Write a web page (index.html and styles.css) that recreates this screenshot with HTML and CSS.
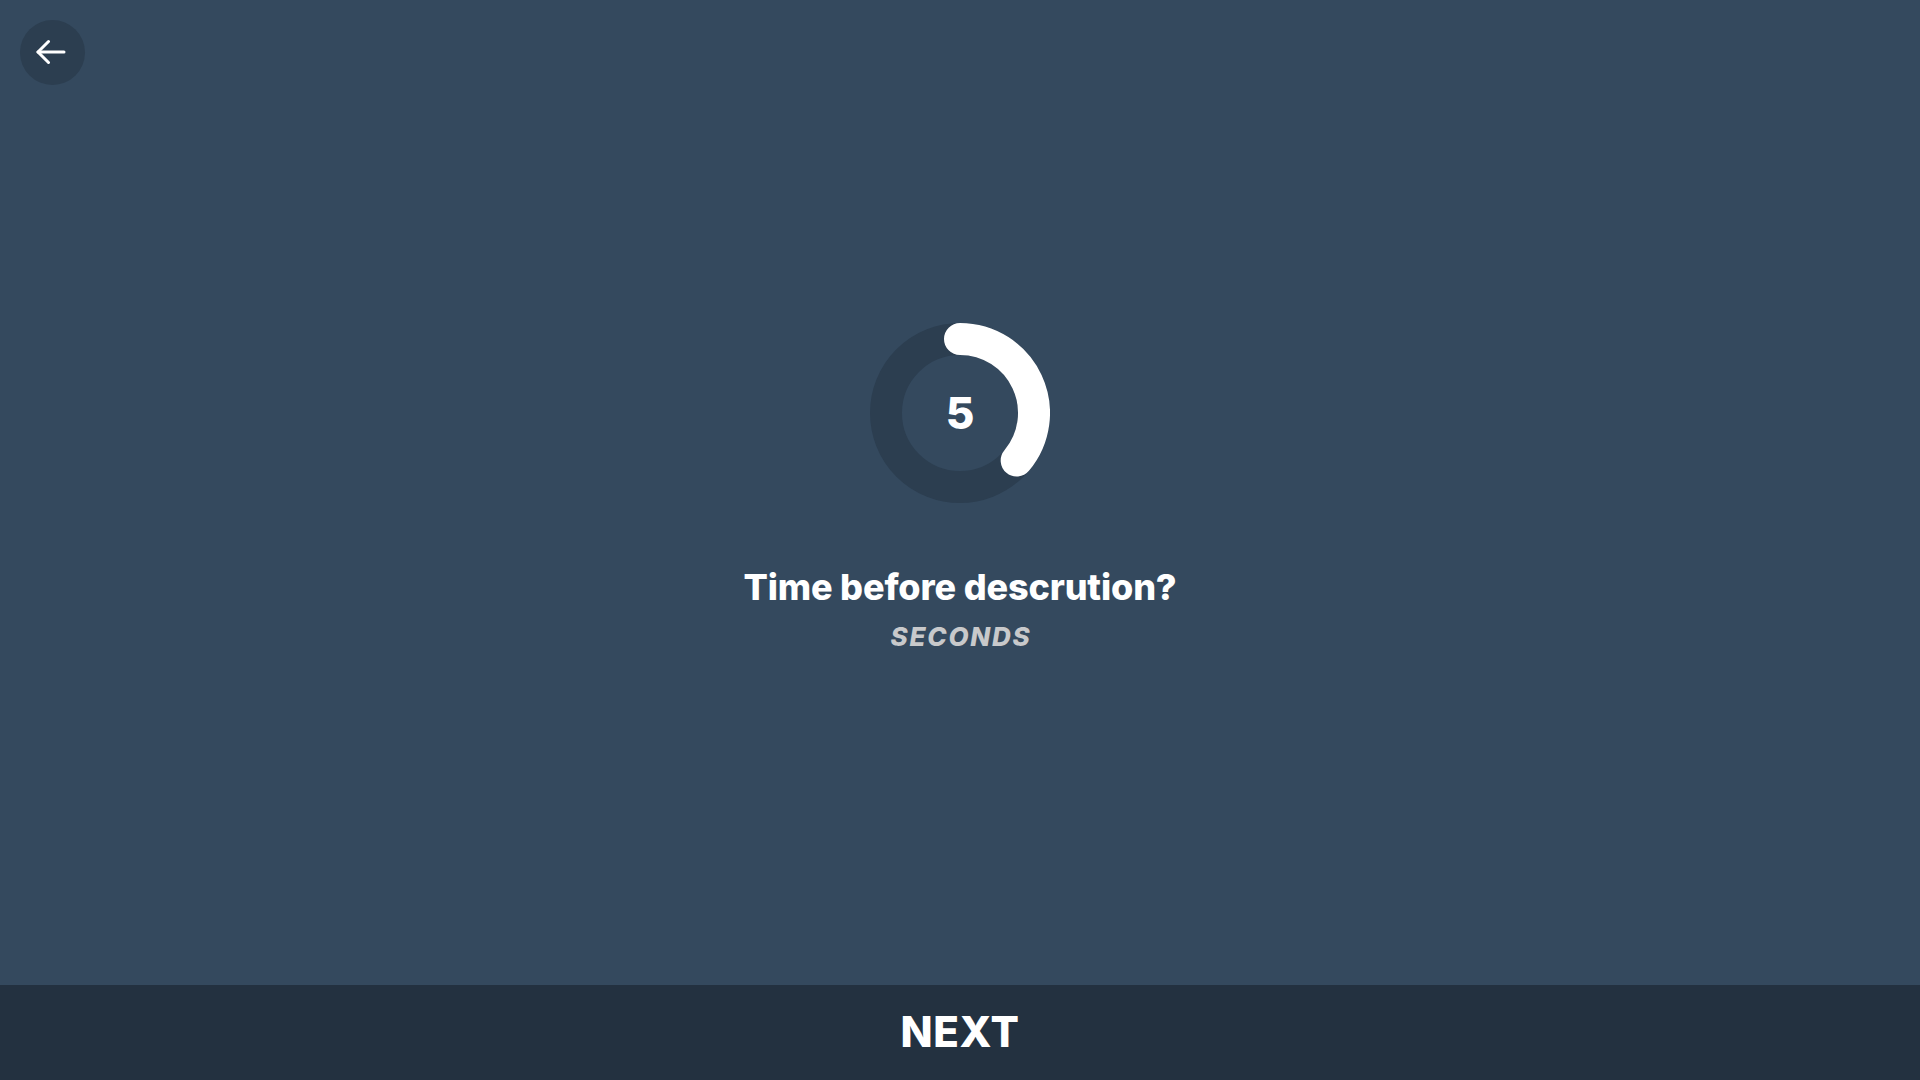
FILE: index.html
```html
<!DOCTYPE html>
<html lang="en">
<head>
<meta charset="utf-8">
<title>Timer</title>
<link rel="stylesheet" href="styles.css">
</head>
<body>
<div class="app">
  <button class="back" aria-label="Back">
    <svg width="30" height="26" viewBox="0 0 30 26" fill="none" stroke="#fff" stroke-width="3" stroke-linecap="round" stroke-linejoin="round">
      <path d="M2 13 H28"/>
      <path d="M12.5 2.5 L2 13 L12.5 23.5"/>
    </svg>
  </button>
  <main class="main">
    <div class="ring">
      <svg width="180" height="180" viewBox="0 0 180 180">
        <circle cx="90" cy="90" r="74" fill="none" stroke="#2c3e50" stroke-width="32"/>
        <path d="M90 16 A74 74 0 0 1 146.69 137.57" fill="none" stroke="#fff" stroke-width="32" stroke-linecap="round"/>
      </svg>
      <span class="count">5</span>
    </div>
    <h1 class="title">Time before descrution?</h1>
    <p class="unit">SECONDS</p>
  </main>
  <footer class="next">NEXT</footer>
</div>
</body>
</html>
```
FILE: styles.css
```css
html, body {
  margin: 0;
  padding: 0;
  height: 100%;
}
* {
  box-sizing: border-box;
}
body {
  background: #34495e;
  font-family: Inter, "Noto Sans", sans-serif;
  color: #fff;
}
.app {
  position: relative;
  height: 1080px;
  display: flex;
  flex-direction: column;
}
.back {
  position: absolute;
  left: 20px;
  top: 20px;
  width: 65px;
  height: 65px;
  border-radius: 50%;
  border: none;
  background: #2c3e50;
  display: flex;
  align-items: center;
  justify-content: center;
  padding: 0 4px 2px 0;
}
.main {
  flex: 1;
  display: flex;
  flex-direction: column;
  align-items: center;
  padding-top: 323px;
}
.ring {
  position: relative;
  width: 180px;
  height: 180px;
}
.ring svg {
  display: block;
}
.count {
  position: absolute;
  inset: 0;
  display: flex;
  align-items: center;
  justify-content: center;
  font-size: 44px;
  font-weight: 800;
  line-height: 1;
}
.title {
  margin: 62px 0 0;
  font-size: 36px;
  font-weight: 800;
  line-height: 44px;
  letter-spacing: -0.15px;
}
.unit {
  margin: 13px 0 0;
  padding-left: 2px;
  font-size: 26px;
  font-weight: 800;
  font-style: italic;
  color: #c8c9cb;
  line-height: 30px;
  letter-spacing: 1.8px;
}
.next {
  flex: 0 0 95px;
  height: 95px;
  background: #233140;
  display: flex;
  align-items: center;
  justify-content: center;
  font-size: 42px;
  font-weight: 800;
  letter-spacing: 0.6px;
  padding-bottom: 2px;
}
```
